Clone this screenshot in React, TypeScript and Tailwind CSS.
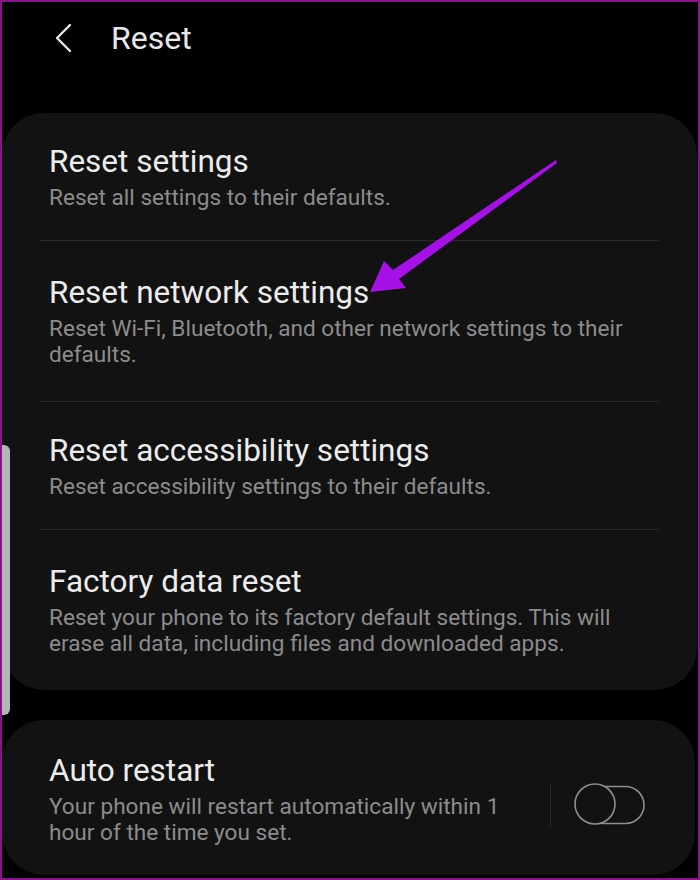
import React from 'react';

const resetItems = [
  { title: 'Reset settings', desc: 'Reset all settings to their defaults.', pad: 'pt-[31px] pb-[29px]' },
  {
    title: 'Reset network settings',
    desc: 'Reset Wi-Fi, Bluetooth, and other network settings to their defaults.',
    pad: 'pt-[34px] pb-[33px]',
  },
  { title: 'Reset accessibility settings', desc: 'Reset accessibility settings to their defaults.', pad: 'pt-[31px] pb-[29px]' },
  {
    title: 'Factory data reset',
    desc: 'Reset your phone to its factory default settings. This will erase all data, including files and downloaded apps.',
    pad: 'pt-[34px] pb-[33px]',
  },
];

const Toggle = () => (
  <svg width="74" height="44" viewBox="0 0 74 44" fill="none">
    <rect x="12" y="3.5" width="59" height="37" rx="18.5" stroke="#8f8f8f" strokeWidth="1.6" />
    <circle cx="22" cy="21" r="20" fill="#121212" stroke="#8f8f8f" strokeWidth="1.6" />
  </svg>
);

const App = () => {
  return (
    <div
      className="relative w-[700px] h-[880px] bg-black border-2 border-[#8b138b] overflow-hidden"
      style={{ fontFamily: 'Roboto, "Noto Sans", sans-serif' }}
    >
      {/* header */}
      <div className="h-[111px] flex items-start pt-[18px]">
        <div className="w-[109px] flex justify-center pl-[12px] pt-[2px]">
          <svg width="22" height="32" viewBox="0 0 22 32" fill="none">
            <path d="M18 3 L5 16 L18 29" stroke="#e8e8e8" strokeWidth="2.4" strokeLinecap="round" strokeLinejoin="round" />
          </svg>
        </div>
        <div className="text-[32px] leading-[36px] text-[#e8e8e8]">Reset</div>
      </div>

      {/* reset card */}
      <div className="mr-[1px] bg-[#121212] rounded-[42px]">
        {resetItems.map((item, i) => (
          <div key={item.title}>
            {i > 0 && <div className="mx-[38px] h-px bg-[#2a2a2a]" />}
            <div className={`pl-[47px] pr-[56px] ${item.pad}`}>
              <div className="text-[31.5px] leading-[36px] text-[#ececec]">{item.title}</div>
              <div className="mt-[5px] text-[22.6px] leading-[26px] text-[#8c8c8c]">{item.desc}</div>
            </div>
          </div>
        ))}
      </div>

      {/* auto restart card */}
      <div className="mt-[30px] mr-[3px] bg-[#121212] rounded-[42px] flex items-center pt-[33px] pb-[29px]">
        <div className="flex-1 pl-[47px]">
          <div className="text-[31.5px] leading-[36px] text-[#ececec]">Auto restart</div>
          <div className="mt-[5px] w-[475px] text-[22.6px] leading-[26px] text-[#8c8c8c]">
            Your phone will restart automatically within 1 hour of the time you set.
          </div>
        </div>
        <div className="w-px h-[44px] bg-[#2a2a2a] mr-[22px] mt-[10px]" />
        <div className="mr-[48px] mt-[10px]">
          <Toggle />
        </div>
      </div>

      {/* scroll indicator */}
      <div className="absolute left-0 top-[443px] w-[8px] h-[270px] bg-[#b5b5b5] rounded-r-[6px]" />

      {/* annotation arrow */}
      <svg className="absolute left-0 top-0" width="700" height="880" viewBox="0 0 700 880">
        <polygon
          points="556,160 393,270 384,261 370,292 406,288 399,279 557,163"
          transform="translate(-2,-2)"
          fill="#a511e6"
        />
      </svg>
    </div>
  );
};

export default App;
